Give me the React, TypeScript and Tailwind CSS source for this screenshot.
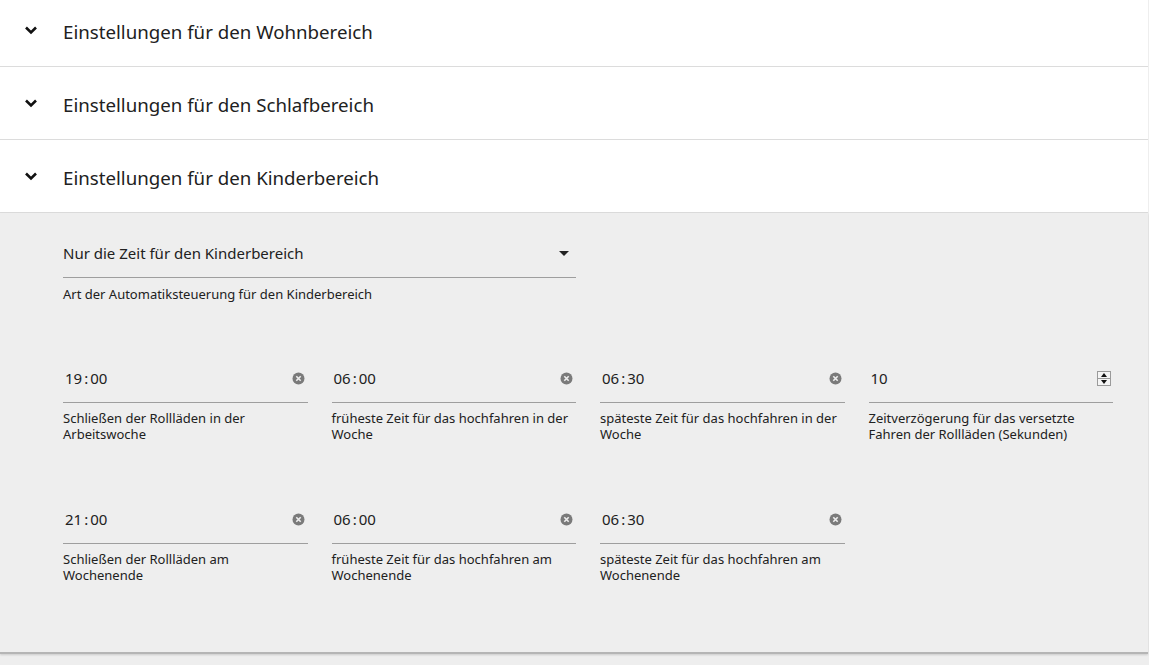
import React from "react";

const font = { fontFamily: '"Noto Sans", "Open Sans", sans-serif' };

function Chevron() {
  return (
    <svg width="14" height="10" viewBox="0 0 14 10" className="shrink-0">
      <path d="M2 2.5 L7 7.5 L12 2.5" fill="none" stroke="#111" strokeWidth="2.6" />
    </svg>
  );
}

function Header({ title, first }: { title: string; first?: boolean }) {
  return (
    <div
      className={
        "flex items-center bg-white border-b border-[#dcdcdc] pl-[24px] " +
        (first ? "h-[67px] pb-[2px]" : "h-[73px] pt-[4px]")
      }
    >
      <div className="w-[39px] flex items-center pb-[4px]">
        <Chevron />
      </div>
      <span className="text-[18.7px] text-[#212121]">{title}</span>
    </div>
  );
}

function ClearIcon() {
  return (
    <svg width="13" height="13" viewBox="0 0 13 13">
      <circle cx="6.5" cy="6.5" r="6" fill="#7a7a7a" />
      <path d="M4.3 4.3 L8.7 8.7 M8.7 4.3 L4.3 8.7" stroke="#eee" strokeWidth="1.6" />
    </svg>
  );
}

function Stepper() {
  return (
    <div className="w-[14px] h-[15px] border border-[#9a9a9a] flex flex-col bg-[#f4f4f4]">
      <div className="flex-1 flex items-center justify-center border-b border-[#9a9a9a]">
        <svg width="6" height="4" viewBox="0 0 6 4"><path d="M0 4 L3 0 L6 4Z" fill="#111" /></svg>
      </div>
      <div className="flex-1 flex items-center justify-center">
        <svg width="6" height="4" viewBox="0 0 6 4"><path d="M0 0 L3 4 L6 0Z" fill="#111" /></svg>
      </div>
    </div>
  );
}

function TimeValue({ v }: { v: string }) {
  const [h, m] = v.split(":");
  return (
    <span className="text-[15px] text-[#212121]">
      {h}
      <span className="px-[2px]">:</span>
      {m}
    </span>
  );
}

function Field({ value, label, number }: { value: string; label: string; number?: boolean }) {
  return (
    <div className="flex flex-col">
      <div
        className={
          "h-[42px] flex items-center justify-between pl-[2px] border-b border-[#9e9e9e] pb-[6px] " +
          (number ? "pr-[2px]" : "pr-[3px]")
        }
      >
        {number ? <span className="text-[15px] text-[#212121]">{value}</span> : <TimeValue v={value} />}
        {number ? <Stepper /> : <ClearIcon />}
      </div>
      <div className="pt-[7px] text-[13px] leading-[16px] text-[#212121] pr-[4px]">{label}</div>
    </div>
  );
}

export default function App() {
  return (
    <div className="w-[1149px] h-[665px] bg-[#eeeeee] overflow-hidden" style={font}>
      <div className="w-[1148px]">
        <Header title="Einstellungen für den Wohnbereich" first />
        <Header title="Einstellungen für den Schlafbereich" />
        <Header title="Einstellungen für den Kinderbereich" />
        <div className="bg-[#eeeeee] h-[441px] border-b-2 border-[#b5b5b5] shadow-[0_1px_2px_rgba(0,0,0,0.15)] pl-[63px] pt-[26px]">
          <div className="w-[513px]">
            <div className="h-[39px] flex items-center justify-between border-b border-[#9e9e9e] pr-[7px] pb-[10px]">
              <span className="text-[15px] text-[#212121]">Nur die Zeit für den Kinderbereich</span>
              <svg width="10" height="5" viewBox="0 0 10 5"><path d="M0 0 L5 5 L10 0Z" fill="#222" /></svg>
            </div>
            <div className="pt-[8px] text-[13px] leading-[16px] text-[#212121]">
              Art der Automatiksteuerung für den Kinderbereich
            </div>
          </div>
          <div className="w-[1050px] grid grid-cols-4 gap-x-[24px] gap-y-[60px] mt-[59px]">
            <Field value="19:00" label="Schließen der Rollläden in der Arbeitswoche" />
            <Field value="06:00" label="früheste Zeit für das hochfahren in der Woche" />
            <Field value="06:30" label="späteste Zeit für das hochfahren in der Woche" />
            <Field value="10" number label="Zeitverzögerung für das versetzte Fahren der Rollläden (Sekunden)" />
            <Field value="21:00" label="Schließen der Rollläden am Wochenende" />
            <Field value="06:00" label="früheste Zeit für das hochfahren am Wochenende" />
            <Field value="06:30" label="späteste Zeit für das hochfahren am Wochenende" />
          </div>
        </div>
      </div>
    </div>
  );
}
